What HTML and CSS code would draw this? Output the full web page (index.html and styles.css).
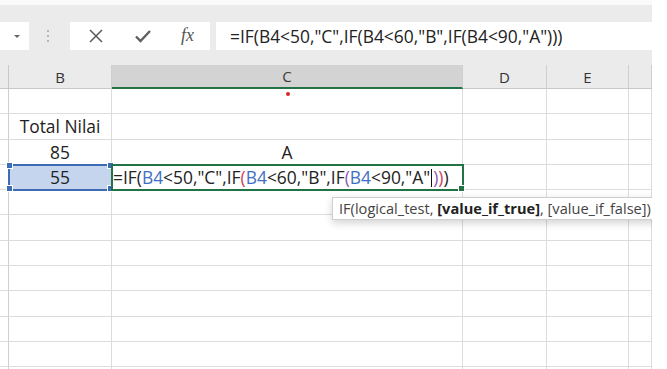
FILE: index.html
```html
<!DOCTYPE html>
<html lang="id">
  <head>
    <meta charset="UTF-8" />
    <meta name="viewport" content="width=device-width, initial-scale=1.0" />
    <title>Rumus IF bertingkat</title>
    <link rel="stylesheet" href="styles.css">
  </head>
  <body>
    <div class="app">
      <div class="top-strip"></div>

      <div class="formula-bar">
        <div class="name-box"><span class="caret"></span></div>
        <div class="grip"><i></i><i></i><i></i></div>
        <div class="fx-buttons">
          <svg class="icon" width="16" height="16" viewBox="0 0 16 16">
            <path d="M2 2 L14 14 M14 2 L2 14" stroke="#5a5a5a" stroke-width="1.5" fill="none" />
          </svg>
          <svg class="icon" width="18" height="16" viewBox="0 0 18 16">
            <path d="M2 8.5 L6.5 13 L16 3" stroke="#5f5f5f" stroke-width="2.4" fill="none" />
          </svg>
          <span class="fx">fx</span>
        </div>
        <div class="formula-input">=IF(B4&lt;50,"C",IF(B4&lt;60,"B",IF(B4&lt;90,"A")))</div>
      </div>

      <div class="sheet">
        <div class="hd corner"></div>
        <div class="hd">B</div>
        <div class="hd active">C</div>
        <div class="hd">D</div>
        <div class="hd">E</div>
        <div class="hd"></div>

        <div class="rh"></div><div class="cell"></div><div class="cell"></div><div class="cell"></div><div class="cell"></div><div class="cell"></div>

        <div class="rh"></div><div class="cell center">Total Nilai</div><div class="cell"></div><div class="cell"></div><div class="cell"></div><div class="cell"></div>

        <div class="rh"></div><div class="cell center">85</div><div class="cell center">A</div><div class="cell"></div><div class="cell"></div><div class="cell"></div>

        <div class="rh"></div>
        <div class="cell center selected">55
          <span class="handle tl"></span><span class="handle tr"></span>
          <span class="handle bl"></span><span class="handle br"></span>
        </div>
        <div class="cell editing">=IF(<span class="ref">B4</span>&lt;50,"C",IF<span class="p2">(</span><span class="ref">B4</span>&lt;60,"B",IF<span class="p3">(</span><span class="ref">B4</span>&lt;90,"A"<span class="cursor"></span><span class="p3">)</span><span class="p2">)</span>)
          <span class="handle br green"></span>
        </div>
        <div class="cell"></div><div class="cell"></div><div class="cell"></div>

        <div class="rh"></div><div class="cell"></div><div class="cell"></div><div class="cell"></div><div class="cell"></div><div class="cell"></div>
        <div class="rh"></div><div class="cell"></div><div class="cell"></div><div class="cell"></div><div class="cell"></div><div class="cell"></div>
        <div class="rh"></div><div class="cell"></div><div class="cell"></div><div class="cell"></div><div class="cell"></div><div class="cell"></div>
        <div class="rh"></div><div class="cell"></div><div class="cell"></div><div class="cell"></div><div class="cell"></div><div class="cell"></div>
        <div class="rh"></div><div class="cell"></div><div class="cell"></div><div class="cell"></div><div class="cell"></div><div class="cell"></div>
        <div class="rh"></div><div class="cell"></div><div class="cell"></div><div class="cell"></div><div class="cell"></div><div class="cell"></div>
        <div class="rh"></div><div class="cell"></div><div class="cell"></div><div class="cell"></div><div class="cell"></div><div class="cell"></div>
        <div class="rh"></div><div class="cell"></div><div class="cell"></div><div class="cell"></div><div class="cell"></div><div class="cell"></div>

        <span class="ink-dot"></span>
        <div class="tooltip">IF(logical_test, <b>[value_if_true]</b>, [value_if_false])</div>
      </div>
    </div>
  </body>
</html>
```

FILE: styles.css
```css
body {
  margin: 0;
  padding: 0;
  background: #fff;
  font-family: "Open Sans", "Noto Sans", sans-serif;
  color: #262626;
  overflow: hidden;
}
.app {
  width: 652px;
  height: 369px;
  overflow: hidden;
  position: relative;
}
.top-strip {
  height: 5px;
  background: #fafafa;
}

/* formula bar */
.formula-bar {
  height: 60px;
  box-sizing: border-box;
  padding-top: 17px;
  background: #ebebeb;
  display: flex;
  align-items: flex-start;
}
.name-box,
.fx-buttons,
.formula-input {
  height: 28px;
  background: #fff;
  box-sizing: border-box;
}
.name-box {
  width: 29px;
  display: flex;
  align-items: center;
  justify-content: flex-end;
  padding-right: 9px;
}
.caret {
  width: 0;
  height: 0;
  border-left: 3px solid transparent;
  border-right: 3px solid transparent;
  border-top: 3px solid #666;
}
.grip {
  width: 41px;
  height: 28px;
  display: flex;
  flex-direction: column;
  align-items: center;
  justify-content: center;
  gap: 3px;
  padding-right: 3px;
  box-sizing: border-box;
}
.grip i {
  width: 2px;
  height: 2px;
  background: #a6a6a6;
  border-radius: 50%;
}
.fx-buttons {
  width: 140px;
  display: flex;
  align-items: center;
  justify-content: space-between;
  padding: 0 16px 0 18px;
}
.fx {
  font-family: "Liberation Serif", serif;
  font-style: italic;
  font-size: 18px;
  color: #555;
  margin-top: -2px;
}
.formula-input {
  margin-left: 6px;
  flex: 1;
  font-size: 17.4px;
  line-height: 28px;
  padding-left: 14px;
  white-space: nowrap;
  color: #222;
}

/* sheet grid */
.sheet {
  display: grid;
  grid-template-columns: 9px 103px 351px 84px 82px 23px;
  grid-template-rows: 24px;
  grid-auto-rows: 25.3px;
  position: relative;
}
.hd {
  background: #ebebeb;
  border-right: 1px solid #cfcfcf;
  border-bottom: 1px solid #c8c8c8;
  box-sizing: border-box;
  font-size: 15px;
  color: #333;
  display: flex;
  align-items: center;
  justify-content: center;
}
.hd.active {
  background: #d3d3d3;
  border-bottom: 2px solid #217346;
  color: #3c3c3c;
}
.hd.corner {
  border-right: 1px solid #c8c8c8;
}
.rh {
  border-right: 1px solid #cfcfcf;
  border-bottom: 1px solid #dcdcdc;
  box-sizing: border-box;
}
.cell {
  border-right: 1px solid #dcdcdc;
  border-bottom: 1px solid #dcdcdc;
  box-sizing: border-box;
  font-size: 17.4px;
  line-height: 25px;
  white-space: nowrap;
  color: #222;
  position: relative;
}
.center {
  text-align: center;
}
.selected {
  background: #c5d5ee;
  outline: 2px solid #3d6cb4;
  outline-offset: -1px;
  z-index: 1;
}
.editing {
  outline: 2px solid #217346;
  outline-offset: -1px;
  padding-left: 1px;
  z-index: 2;
  overflow: visible;
}
.ref {
  color: #3f6fc2;
}
.p2 {
  color: #d0405a;
}
.p3 {
  color: #8a5bb0;
}
.cursor {
  display: inline-block;
  width: 1px;
  height: 18px;
  background: #111;
  vertical-align: -3px;
  margin: 0 1px;
}
.handle {
  position: absolute;
  width: 5px;
  height: 5px;
  background: #3d6cb4;
  border: 1px solid #fff;
}
.handle.green {
  background: #217346;
}
.tl { top: -3px; left: -3px; }
.tr { top: -3px; right: -3px; }
.bl { bottom: -3px; left: -3px; }
.br { bottom: -3px; right: -3px; }

.ink-dot {
  position: absolute;
  left: 286px;
  top: 27px;
  width: 4px;
  height: 4px;
  border-radius: 50%;
  background: #d42a2a;
}
.tooltip {
  position: absolute;
  left: 332px;
  top: 132px;
  height: 21px;
  padding: 0 6px;
  background: #fff;
  border: 1px solid #cfcfcf;
  box-shadow: 0 3px 8px rgba(0, 0, 0, 0.18);
  font-size: 14.6px;
  line-height: 21px;
  color: #444;
  white-space: nowrap;
  z-index: 3;
}
.tooltip b {
  color: #222;
}
```
